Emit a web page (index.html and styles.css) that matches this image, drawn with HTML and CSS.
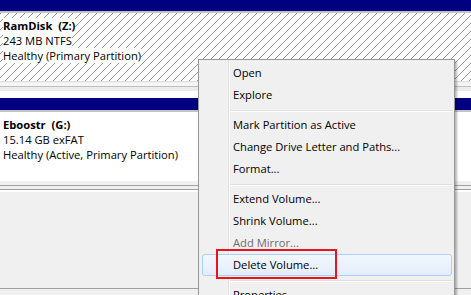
FILE: index.html
```html
<!DOCTYPE html>
<html lang="en">
<head>
<meta charset="utf-8">
<title>Disk Management - context menu</title>
<meta name="viewport" content="width=device-width,initial-scale=1">
<link rel="stylesheet" href="styles.css">
</head>

<body>
<main class="disks">

  <!-- RamDisk (selected, hatched) -->
  <section class="volume">
    <div class="vol-bar"></div>
    <div class="vol-body is-selected">
      <span class="vol-name">RamDisk&nbsp;&nbsp;(Z:)</span>
      <span>243 MB NTFS</span>
      <span>Healthy (Primary Partition)</span>
    </div>
  </section>

  <div class="row-gap"></div>

  <!-- Eboostr -->
  <section class="volume">
    <div class="vol-bar"></div>
    <div class="vol-body">
      <span class="vol-name">Eboostr&nbsp;&nbsp;(G:)</span>
      <span>15.14 GB exFAT</span>
      <span>Healthy (Active, Primary Partition)</span>
    </div>
  </section>

  <div class="row-gap row-gap--double"></div>
  <div class="empty-row"></div>
  <div class="bottom-line"></div>

</main>

<!-- ===== context menu ===== -->
<ul class="ctx-menu">
  <li>Open</li>
  <li>Explore</li>
  <li class="sep"></li>
  <li>Mark Partition as Active</li>
  <li>Change Drive Letter and Paths...</li>
  <li>Format...</li>
  <li class="sep"></li>
  <li>Extend Volume...</li>
  <li>Shrink Volume...</li>
  <li class="is-disabled">Add Mirror...</li>
  <li class="is-hover">Delete Volume...</li>
  <li class="sep"></li>
  <li>Properties</li>
</ul>

<!-- annotation -->
<div class="mark-box"></div>
</body>
</html>
```

FILE: styles.css
```css
/* ── palette ─────────────────────────────── */
:root{
  --c-navy:#000080;
  --c-face:#f0f0f0;
  --c-line:#a0a0a0;
  --c-menu-border:#979797;
  --c-hatch:#9a9a9a;
}

*,*::before,*::after{box-sizing:border-box}
html,body{margin:0;height:100%}
body{position:relative;overflow:hidden;background:var(--c-face);
     font-family:"Open Sans","Noto Sans",sans-serif;font-size:11.2px;color:#000}

/* ── disk rows ───────────────────────────── */
.disks{display:flex;flex-direction:column}
.vol-bar{height:13px;background:var(--c-navy);
         border-bottom:2px solid #c4c4c4}
.vol-body{display:flex;flex-direction:column;align-items:flex-start;
          height:68px;padding:5px 0 0 3px;line-height:15px;background:#fff}
.vol-body span{background:#fff}
.vol-body.is-selected{
  background:repeating-linear-gradient(135deg,
             var(--c-hatch) 0 1px,#fff 1px 5.66px)}
.vol-name{font-weight:700}

.volume + .row-gap + .volume .vol-bar{height:14px}
.volume + .row-gap + .volume .vol-body{height:69px}

.row-gap{height:17px;
  background:linear-gradient(#dcdcdc 0 1px,#f4f4f4 1px 5px,#bdbdbd 5px 6px,
             #ececec 6px 10px,#fff 10px 16px,#fdfdfd 16px)}
.row-gap--double{height:11px;
  background:linear-gradient(var(--c-face) 0 4px,var(--c-line) 4px 5px,
             var(--c-face) 5px 8px,var(--c-line) 8px 9px,#fff 9px 11px)}
.empty-row{height:96px;background:var(--c-face)}
.bottom-line{height:6px;border-top:1px solid var(--c-line);background:var(--c-face)}

/* ── context menu ────────────────────────── */
.ctx-menu{position:absolute;left:198px;top:59px;width:257px;
          margin:0;padding:2px 0;list-style:none;
          background:
            linear-gradient(to right,transparent 29px,#e2e3e3 29px 30px,
                            #fff 30px 31px,transparent 31px),
            var(--c-face);
          border:1px solid var(--c-menu-border);
          box-shadow:2px 2px 2px rgba(0,0,0,.28)}
.ctx-menu li{height:22px;line-height:22px;padding-left:34px;white-space:nowrap}
.ctx-menu li.sep{height:8px;padding:0;margin-left:31px;margin-right:2px;
                 background:linear-gradient(transparent 4px,#e0e0e0 4px 5px,
                                            #fff 5px 6px,transparent 6px)}
.ctx-menu li.is-disabled{color:#6d6d6d}
.ctx-menu li.is-hover{margin:0 2px 0 3px;padding-left:30px;line-height:20px;
                      border:1px solid #aecff7;border-radius:3px;
                      background:linear-gradient(#f2f7fd,#e3edfa)}

/* ── red annotation box ──────────────────── */
.mark-box{position:absolute;left:216px;top:249px;width:121px;height:30px;
          border:2px solid #e8141e}
```
